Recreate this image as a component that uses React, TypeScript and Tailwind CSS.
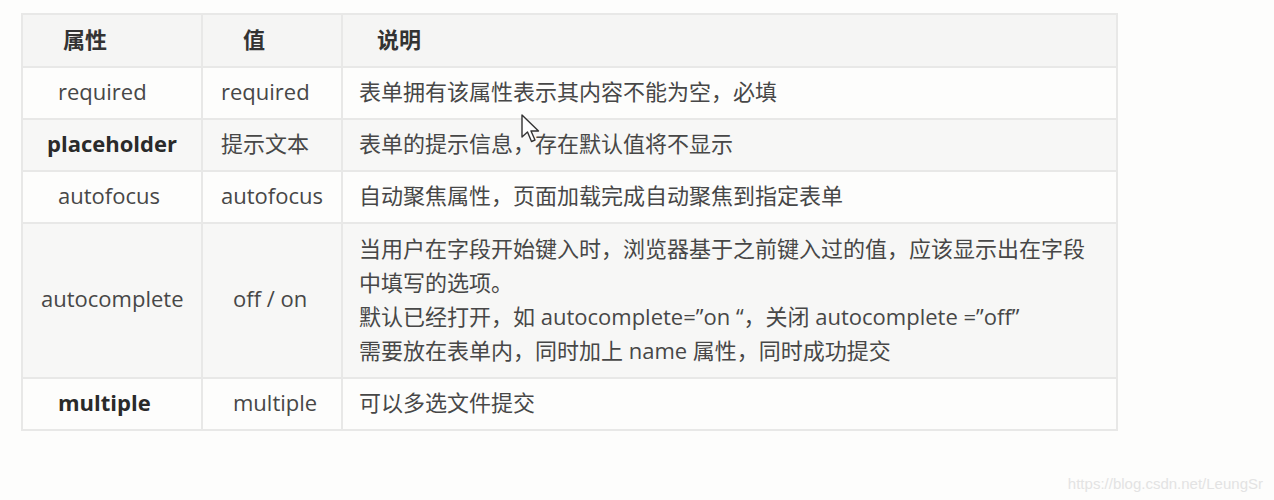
import React from "react";

type Row = {
  name: string;
  bold?: boolean;
  namePad: string;
  value: string;
  valuePad: string;
  desc: string[];
  tall?: boolean;
};

const rows: Row[] = [
  {
    name: "required",
    namePad: "pl-[35px]",
    value: "required",
    valuePad: "pl-[18px]",
    desc: ["表单拥有该属性表示其内容不能为空，必填"],
  },
  {
    name: "placeholder",
    bold: true,
    namePad: "pl-[24px]",
    value: "提示文本",
    valuePad: "pl-[18px]",
    desc: ["表单的提示信息，存在默认值将不显示"],
  },
  {
    name: "autofocus",
    namePad: "pl-[35px]",
    value: "autofocus",
    valuePad: "pl-[18px]",
    desc: ["自动聚焦属性，页面加载完成自动聚焦到指定表单"],
  },
  {
    name: "autocomplete",
    namePad: "pl-[18px]",
    value: "off / on",
    valuePad: "pl-[30px]",
    tall: true,
    desc: [
      "当用户在字段开始键入时，浏览器基于之前键入过的值，应该显示出在字段",
      "中填写的选项。",
      "默认已经打开，如 autocomplete=”on “，关闭 autocomplete =”off”",
      "需要放在表单内，同时加上 name 属性，同时成功提交",
    ],
  },
  {
    name: "multiple",
    bold: true,
    namePad: "pl-[35px]",
    value: "multiple",
    valuePad: "pl-[30px]",
    desc: ["可以多选文件提交"],
  },
];

function Cursor() {
  return (
    <svg
      className="absolute left-[521px] top-[114px]"
      width="22"
      height="30"
      viewBox="0 0 22 30"
    >
      <path
        d="M1 1 L1 23 L6.5 18 L10.5 27.5 L14 26 L10 17 L17.5 17 Z"
        fill="#fff"
        stroke="#333"
        strokeWidth="1.4"
        strokeLinejoin="round"
      />
    </svg>
  );
}

export default function App() {
  return (
    <div
      className="relative w-[1274px] h-[500px] bg-[#fdfdfc] overflow-hidden"
      style={{ fontFamily: '"Open Sans", "Noto Sans CJK SC", sans-serif' }}
    >
      <div className="pt-[13px] pl-[21px]">
        <table className="border-collapse w-[1097px] text-[22px] text-[#474747]">
          <thead>
            <tr className="bg-[#f5f5f4] h-[53px]">
              <th className="w-[180px] border-2 border-[#e8e8e7] text-left pl-[40px] pb-[2px] font-bold text-[#333]">属性</th>
              <th className="w-[140px] border-2 border-[#e8e8e7] text-left pl-[40px] pb-[2px] font-bold text-[#333]">值</th>
              <th className="border-2 border-[#e8e8e7] text-left pl-[34px] pb-[2px] font-bold text-[#333]">说明</th>
            </tr>
          </thead>
          <tbody>
            {rows.map((r, i) => (
              <tr
                key={r.name}
                className={`${i % 2 === 1 ? "bg-[#f7f7f6]" : "bg-[#fdfdfc]"} ${r.tall ? "h-[155px]" : "h-[52px]"}`}
              >
                <td
                  className={`border-2 border-[#e8e8e7] text-left pb-[4px] ${r.namePad} ${
                    r.bold ? "font-bold text-[#2a2a2a]" : ""
                  }`}
                >
                  {r.name}
                </td>
                <td className={`border-2 border-[#e8e8e7] text-left pb-[4px] ${r.valuePad}`}>
                  {r.value}
                </td>
                <td className="border-2 border-[#e8e8e7] pl-[16px] leading-[34px] pt-[6px] pb-[10px]">
                  {r.desc.map((line) => (
                    <div key={line}>{line}</div>
                  ))}
                </td>
              </tr>
            ))}
          </tbody>
        </table>
      </div>

      <Cursor />

      <div
        className="absolute right-[11px] top-[473px] text-[15px] text-[#e3e3e3]"
        style={{ fontFamily: '"Liberation Sans", Arial, sans-serif' }}
      >
        https://blog.csdn.net/LeungSr
      </div>
    </div>
  );
}
